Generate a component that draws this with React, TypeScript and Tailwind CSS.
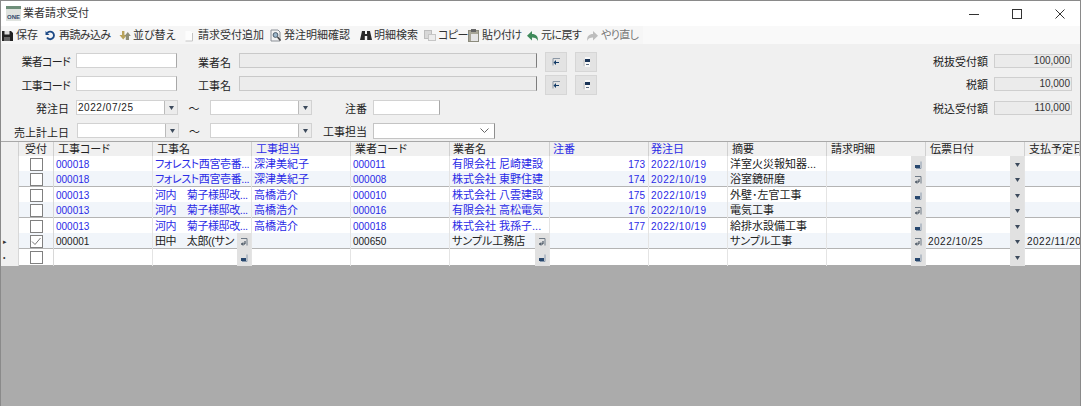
import { ReactNode } from "react";

const jpBlue = "text-[#2a2ae6]";

// ---- small drawings ----
function SaveIcon() {
  return (
    <svg width="11" height="11" viewBox="0 0 11 11">
      <path d="M0 1h9l2 2v8H0z" fill="#222" />
      <rect x="2.5" y="1" width="5" height="3.5" fill="#ddd" />
      <rect x="2" y="7" width="6" height="4" fill="#666" />
    </svg>
  );
}
function ReloadIcon() {
  return (
    <svg width="11" height="11" viewBox="0 0 11 11" fill="none">
      <path d="M2 7.5A3.8 3.8 0 1 0 2.2 3" stroke="#1d4a86" strokeWidth="1.9" />
      <path d="M0.5 1v4h4z" fill="#1d4a86" />
    </svg>
  );
}
function SortIcon() {
  return (
    <svg width="12" height="11" viewBox="0 0 12 11">
      <path d="M3 1h2.4v4H8L4.2 9.5 0.5 5H3z" fill="#b9a45c" />
      <path d="M8 10H6.8V6H5.5L8.8 2l3 4H10v4z" fill="#8f8f78" />
    </svg>
  );
}
function PageIcon() {
  return (
    <svg width="10" height="12" viewBox="0 0 10 12">
      <path d="M1.5 1h5l2 2v8h-7z" fill="#fdfdfd" />
      <path d="M8.5 3v8h-7" fill="none" stroke="#c4c4c4" />
    </svg>
  );
}
function PreviewIcon() {
  return (
    <svg width="12" height="13" viewBox="0 0 12 13">
      <path d="M1 1h7l2 2v9H1z" fill="#f2f2f2" stroke="#8a8f96" />
      <circle cx="5.5" cy="6" r="2.4" fill="#9db8cc" stroke="#4d5d6a" />
      <path d="M7.5 8l3 3.5" stroke="#444" strokeWidth="1.5" />
    </svg>
  );
}
function BinocularsIcon() {
  return (
    <svg width="12" height="11" viewBox="0 0 12 11">
      <path d="M2 1h3v3h2V1h3l2 9H7.2V6H4.8v4H0z" fill="#2b2b2b" />
    </svg>
  );
}
function CopyIcon() {
  return (
    <svg width="12" height="12" viewBox="0 0 12 12">
      <rect x="0.5" y="0.5" width="7" height="8" fill="#d8d8d8" stroke="#bdbdbd" />
      <rect x="4.5" y="4.5" width="7" height="6" fill="#ececec" stroke="#c6c6c6" />
    </svg>
  );
}
function PasteIcon() {
  return (
    <svg width="11" height="13" viewBox="0 0 11 13">
      <rect x="0.5" y="1.5" width="10" height="11" fill="#a8a697" stroke="#8c8b7d" />
      <rect x="3" y="0" width="5" height="3" fill="#666" />
      <rect x="3" y="5" width="7" height="7" fill="#e5e5e5" />
    </svg>
  );
}
function ArrowIcon({ color, flip = false }: { color: string; flip?: boolean }) {
  return (
    <svg width="11" height="10" viewBox="0 0 11 10" className={flip ? "-scale-x-100" : ""}>
      <path d="M5 0v3c4 0 6 2 6 7-1-2.500-3-3.500-6-3.500V9.500L0 4.700z" fill={color} />
    </svg>
  );
}
function PickerLeft() {
  return (
    <svg width="9" height="9" viewBox="0 0 9 9">
      <path d="M1 .5h7M1 .5v7" stroke="#8b97a5" fill="none" />
      <path d="M7 4H4V2L1.500 4.500 4 7V5h3z" fill="#123a66" />
    </svg>
  );
}
function PickerDown() {
  return (
    <svg width="9" height="10" viewBox="0 0 9 10">
      <rect x="1" y="3" width="3" height="6" fill="#d2d2d2" />
      <rect x="3" y="0" width="5" height="10" fill="#f8f8f8" />
      <rect x="3" y="2" width="5" height="3" fill="#1b3558" />
      <rect x="4" y="7" width="3" height="1" fill="#5a6a80" />
    </svg>
  );
}
function CellFilled() {
  return (
    <svg width="8" height="8" viewBox="0 0 8 8">
      <path d="M7 .5v7H2" fill="none" stroke="#8a9aad" />
      <rect x="1" y="4" width="5" height="3" fill="#27476e" />
    </svg>
  );
}
function CellOutlined() {
  return (
    <svg width="8" height="8" viewBox="0 0 8 8">
      <path d="M1 .5h6v7" fill="none" stroke="#6f7a86" />
      <path d="M5 3v3H1.500M3 4.500 1.500 6 3 7.500" fill="none" stroke="#2e3c4c" />
    </svg>
  );
}
function Triangle() {
  return (
    <svg width="5" height="4" viewBox="0 0 5 4">
      <path d="M0 0h5L2.500 4z" fill="#3c4a5c" />
    </svg>
  );
}
function AppIcon() {
  return (
    <svg width="15" height="15" viewBox="0 0 15 15">
      <rect width="15" height="15" fill="#dfe3df" />
      <rect width="15" height="3" fill="#6f8f7a" />
      <text x="7.500" y="13" textAnchor="middle" fontSize="6" fontWeight="700" fill="#33496b">ONE</text>
    </svg>
  );
}

// ---- toolbar ----
const toolbarItems: { label: string; icon: ReactNode; width: string; dim?: boolean; tight?: boolean }[] = [
  { label: "保存", icon: <SaveIcon />, width: "w-[43px]" },
  { label: "再読み込み", icon: <ReloadIcon />, width: "w-[74px]", tight: true },
  { label: "並び替え", icon: <SortIcon />, width: "w-[65px]" },
  { label: "請求受付追加", icon: <PageIcon />, width: "w-[86px]" },
  { label: "発注明細確認", icon: <PreviewIcon />, width: "w-[90px]" },
  { label: "明細検索", icon: <BinocularsIcon />, width: "w-[64px]" },
  { label: "コピー", icon: <CopyIcon />, width: "w-[44px]", tight: true },
  { label: "貼り付け", icon: <PasteIcon />, width: "w-[59px]", tight: true },
  { label: "元に戻す", icon: <ArrowIcon color="#3f8a5a" />, width: "w-[60px]", tight: true },
  { label: "やり直し", icon: <ArrowIcon color="#bdbdbd" flip />, width: "w-[56px]", dim: true, tight: true },
];

function Toolbar() {
  return (
    <div className="flex h-[18px] items-center bg-[#f9f9f9]">
      <div className="flex h-full w-[642px] items-center bg-[#f6f6f6] pt-px pl-[1px]">
        {toolbarItems.map((item) => (
          <div key={item.label} className={`flex items-center ${item.width} shrink-0`}>
            <span className="flex w-[14px] shrink-0 items-center">{item.icon}</span>
            <span className={`whitespace-nowrap ${item.tight ? "tracking-[-0.6px]" : ""} ${item.dim ? "text-[#777]" : "text-[#333]"}`}>
              {item.label}
            </span>
          </div>
        ))}
      </div>
    </div>
  );
}

// ---- form ----
function Label({ width, children, low = false, tight = false }: { width: string; children: ReactNode; low?: boolean; tight?: boolean }) {
  return (
    <span className={`${width} shrink-0 ${low ? "pt-[6px]" : "pt-[3px]"} ${tight ? "tracking-[-0.7px]" : ""} text-right whitespace-nowrap text-[#222]`}>
      {children}
    </span>
  );
}

function TextBox({ width, margin = "" }: { width: string; margin?: string }) {
  return <div className={`${width} ${margin} h-[15px] shrink-0 border border-[#d2d2d2] border-r-[#a8a8a8] bg-white`} />;
}

function ReadOnlyBox() {
  return <div className="ml-[8px] h-[15px] w-[298px] shrink-0 border border-[#c9c9c9] border-r-[#7d7d7d] bg-[#ececec]" />;
}

function PickerButton({ margin, children }: { margin: string; children: ReactNode }) {
  return (
    <div className={`${margin} -mt-px flex h-[20px] w-[22px] shrink-0 items-center justify-center self-start border border-[#d6d6d6] bg-[#e3e3e3]`}>
      {children}
    </div>
  );
}

function DateBox({ value = "", margin = "" }: { value?: string; margin?: string }) {
  return (
    <div className={`${margin} flex h-[15px] w-[102px] shrink-0 border border-[#d2d2d2] bg-white`}>
      <span className="flex-1 pl-[1px] text-[10px] leading-[13px] tracking-[0.55px] text-[#222]">{value}</span>
      <span className="flex w-[13px] items-center justify-center border-l border-[#bbb] bg-[#ececec]">
        <Triangle />
      </span>
    </div>
  );
}

function Amount({ label, value }: { label: string; value: string }) {
  return (
    <div className="flex h-[15px] items-center justify-end">
      <span className="pt-[3px] text-[#222]">{label}</span>
      <div className="ml-[6px] h-[14px] w-[78px] border border-[#cfcfcf] bg-[#ebebeb] pr-[1px] text-right text-[10px] leading-[12px] text-[#333]">
        {value}
      </div>
    </div>
  );
}

function FilterForm() {
  return (
    <div className="flex h-[97px] bg-[#f0f0f0] pt-[9px] pr-[8px]">
      <div className="flex flex-col">
        <div className="flex h-[15px] items-center">
          <Label width="w-[69px]" tight>業者コード</Label>
          <TextBox width="w-[101px]" margin="ml-[6px]" />
          <Label width="w-[54px]" low>業者名</Label>
          <ReadOnlyBox />
          <PickerButton margin="ml-[8px]"><PickerLeft /></PickerButton>
          <PickerButton margin="ml-[8px]"><PickerDown /></PickerButton>
        </div>
        <div className="mt-[8px] flex h-[15px] items-center">
          <Label width="w-[69px]" low tight>工事コード</Label>
          <TextBox width="w-[101px]" margin="ml-[6px]" />
          <Label width="w-[54px]" low>工事名</Label>
          <ReadOnlyBox />
          <PickerButton margin="ml-[8px]"><PickerLeft /></PickerButton>
          <PickerButton margin="ml-[8px]"><PickerDown /></PickerButton>
        </div>
        <div className="mt-[9px] flex h-[15px] items-center">
          <Label width="w-[68px]">発注日</Label>
          <DateBox value="2022/07/25" margin="ml-[7px]" />
          <span className="w-[32px] pt-[3px] text-center text-[#222]">～</span>
          <DateBox />
          <Label width="w-[55px]">注番</Label>
          <TextBox width="w-[67px]" margin="ml-[6px]" />
        </div>
        <div className="mt-[8px] flex h-[15px] items-center">
          <Label width="w-[68px]" low>売上計上日</Label>
          <DateBox margin="ml-[8px]" />
          <span className="w-[31px] pt-[3px] text-center text-[#222]">～</span>
          <DateBox />
          <Label width="w-[55px]">工事担当</Label>
          <div className="ml-[6px] flex h-[16px] w-[122px] shrink-0 items-center justify-end border border-[#c4c4c4] border-r-[#8f8f8f] bg-white pr-[5px]">
            <svg width="9" height="5" viewBox="0 0 9 5" fill="none">
              <path d="M.5.500l4 4 4-4" stroke="#666" />
            </svg>
          </div>
        </div>
      </div>
      <div className="flex flex-1 flex-col gap-[8px]">
        <Amount label="税抜受付額" value="100,000" />
        <Amount label="税額" value="10,000" />
        <div className="mt-px">
          <Amount label="税込受付額" value="110,000" />
        </div>
      </div>
    </div>
  );
}

// ---- grid ----
const gridCols = "grid grid-cols-[18px_35px_99px_99px_99px_99px_100px_99px_79px_99px_99px_99px_1fr]";

const headers: { label: string; blue?: boolean; pad?: string }[] = [
  { label: "" },
  { label: "受付" },
  { label: "工事コード" },
  { label: "工事名" },
  { label: "工事担当", blue: true },
  { label: "業者コード" },
  { label: "業者名", pad: "pl-[3px]" },
  { label: "注番", blue: true, pad: "pl-[3px]" },
  { label: "発注日", blue: true, pad: "pl-[2px]" },
  { label: "摘要" },
  { label: "請求明細" },
  { label: "伝票日付" },
  { label: "支払予定日" },
];

type Row = {
  code: string;
  name: string;
  staff: string;
  vendorCode: string;
  vendor: string;
  no: string;
  date: string;
  summary: string;
  slip: string;
  pay: string;
  checked?: boolean;
  marker?: string;
  blue: boolean;
  editing?: boolean;
};

const empty = { slip: "", pay: "" };
const rows: Row[] = [
  { code: "000018", name: "フォレスト西宮壱番...", staff: "深津美紀子", vendorCode: "000011", vendor: "有限会社 尼崎建設", no: "173", date: "2022/10/19", summary: "洋室火災報知器...", blue: true, ...empty },
  { code: "000018", name: "フォレスト西宮壱番...", staff: "深津美紀子", vendorCode: "000008", vendor: "株式会社 東野住建", no: "174", date: "2022/10/19", summary: "浴室鏡研磨", blue: true, ...empty },
  { code: "000013", name: "河内　菊子様邸改...", staff: "高橋浩介", vendorCode: "000010", vendor: "株式会社 八雲建設", no: "175", date: "2022/10/19", summary: "外壁･左官工事", blue: true, ...empty },
  { code: "000013", name: "河内　菊子様邸改...", staff: "高橋浩介", vendorCode: "000016", vendor: "有限会社 高松電気", no: "176", date: "2022/10/19", summary: "電気工事", blue: true, ...empty },
  { code: "000013", name: "河内　菊子様邸改...", staff: "高橋浩介", vendorCode: "000018", vendor: "株式会社 我孫子...", no: "177", date: "2022/10/19", summary: "給排水設備工事", blue: true, ...empty },
  { code: "000001", name: "田中　太郎((サン", staff: "", vendorCode: "000650", vendor: "サンプル工務店", no: "", date: "", summary: "サンプル工事", slip: "2022/10/25", pay: "2022/11/20", checked: true, marker: "▸", blue: false, editing: true },
  { code: "", name: "", staff: "", vendorCode: "", vendor: "", no: "", date: "", summary: "", slip: "", pay: "", marker: "•", blue: false, editing: true },
];

function Cell({ children, className = "", button }: { children?: ReactNode; className?: string; button?: ReactNode }) {
  return (
    <div className={`flex min-w-0 border-r border-[#e4e4e4] ${className}`}>
      <span className="min-w-0 flex-1 overflow-hidden pl-[2px] whitespace-nowrap">{children}</span>
      {button && <span className="flex w-[14px] shrink-0 items-center justify-center bg-[#e1e1e1]">{button}</span>}
    </div>
  );
}

function Check({ checked }: { checked?: boolean }) {
  return (
    <div className="flex h-[13px] w-[13px] items-center justify-center border-[1.5px] border-[#808080] bg-white">
      {checked && (
        <svg width="10" height="9" viewBox="0 0 10 9" fill="none">
          <path d="M1 4.500l3 3L9.500 1" stroke="#777" />
        </svg>
      )}
    </div>
  );
}

function GridRow({ row, index }: { row: Row; index: number }) {
  const alt = index % 2 === 1;
  const textColor = row.blue ? jpBlue : "text-[#222]";
  const rowButton = index % 2 === 0 ? <CellFilled /> : <CellOutlined />;
  return (
    <div
      className={`${gridCols} ${alt ? "h-[16px] border-b border-[#b4b4b4] bg-[#f1f5fa]" : index === 6 ? "h-[16px] bg-white" : "h-[15px] bg-white"} leading-[17px] ${textColor}`}
    >
      <div className="flex items-center border-r border-[#d8d8d8] bg-[#f0f0f0] pl-[2px] text-[7px] text-[#333]">{row.marker}</div>
      <div className="flex items-center justify-center border-r border-[#d8d8d8]">
        <Check checked={row.checked} />
      </div>
      <Cell className="text-[10px]">{row.code}</Cell>
      <Cell className="tracking-[-0.4px]" button={row.editing ? rowButton : undefined}>{row.name}</Cell>
      <Cell>{row.staff}</Cell>
      <Cell className="text-[10px]">{row.vendorCode}</Cell>
      <Cell button={row.editing ? rowButton : undefined}>{row.vendor}</Cell>
      <div className="border-r border-[#e4e4e4] pr-[3px] text-right text-[10px]">{row.no}</div>
      <Cell className="text-[10px] tracking-[0.55px]">{row.date}</Cell>
      <Cell className="text-[#222]">{row.summary}</Cell>
      <Cell button={rowButton} />
      <Cell className="text-[10px] tracking-[0.5px] text-[#222]" button={<Triangle />}>{row.slip}</Cell>
      <div className="overflow-hidden pl-[2px] text-[10px] tracking-[0.5px] whitespace-nowrap text-[#222]">{row.pay}</div>
    </div>
  );
}

function DataGrid() {
  return (
    <div className="border-t border-[#a8a8a8]">
      <div className={`${gridCols} h-[14px] bg-[#f0f0f0] leading-[14px]`}>
        {headers.map((h, i) => (
          <div
            key={i}
            className={`overflow-hidden border-r border-[#d0d0d0] whitespace-nowrap ${i === 1 ? "text-center" : h.pad ?? "pl-[4px]"} ${h.blue ? jpBlue : "text-[#222]"}`}
          >
            {h.label}
          </div>
        ))}
      </div>
      {rows.map((row, i) => (
        <GridRow key={i} row={row} index={i} />
      ))}
    </div>
  );
}

export default function App() {
  return (
    <div className="flex h-[406px] w-[1081px] flex-col overflow-hidden border-x border-t border-[#8a8a8a] bg-[#ababab] text-[11px] [font-family:'Liberation_Sans','Noto_Sans_CJK_JP',sans-serif] [font-feature-settings:'palt']">
      {/* title bar */}
      <div className="flex h-[25px] shrink-0 items-center bg-white pl-[5px]">
        <AppIcon />
        <span className="ml-[2px] text-[11px] text-[#333]">業者請求受付</span>
        <div className="ml-auto flex items-center">
          <svg width="10" height="10" viewBox="0 0 10 10" className="mr-[33px]">
            <path d="M0 5.500h10" stroke="#333" />
          </svg>
          <svg width="10" height="10" viewBox="0 0 10 10" className="mr-[33px]">
            <rect x="0.500" y="0.500" width="9" height="9" fill="none" stroke="#333" />
          </svg>
          <svg width="10" height="10" viewBox="0 0 10 10" className="mr-[15px]">
            <path d="M.5.500l9 9M9.500.500l-9 9" stroke="#333" />
          </svg>
        </div>
      </div>
      <Toolbar />
      <FilterForm />
      <DataGrid />
    </div>
  );
}
